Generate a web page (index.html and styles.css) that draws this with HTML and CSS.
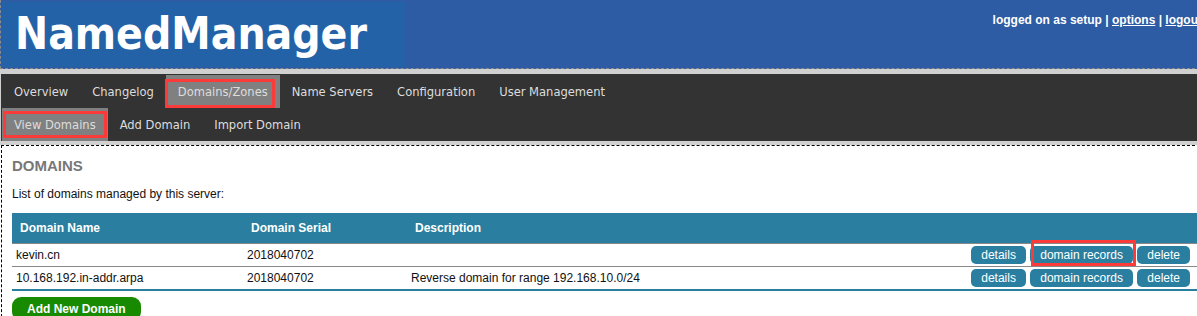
FILE: index.html
```html
<!DOCTYPE html>
<html>
<head>
    <link rel="stylesheet" href="styles.css">
</head>
<body>
<div class="page">
    <div class="header">
        <div class="logo">NamedManager</div>
        <div class="userbar">logged on as setup | <a href="#">options</a> | <a href="#">logout</a></div>
    </div>

    <div class="navwrap">
        <div class="nav">
            <div class="menu">
                <a href="#">Overview</a>
                <a href="#">Changelog</a>
                <a href="#" class="active">Domains/Zones<span class="mark mark-zones"></span></a>
                <a href="#">Name Servers</a>
                <a href="#">Configuration</a>
                <a href="#">User Management</a>
            </div>
            <div class="menu">
                <a href="#" class="active">View Domains<span class="mark mark-view"></span></a>
                <a href="#">Add Domain</a>
                <a href="#">Import Domain</a>
            </div>
        </div>
    </div>

    <div class="content">
        <h2 class="title">DOMAINS</h2>
        <p class="intro">List of domains managed by this server:</p>

        <table class="domains">
            <tr>
                <th class="c-name">Domain Name</th>
                <th class="c-serial">Domain Serial</th>
                <th class="c-desc">Description</th>
                <th></th>
            </tr>
            <tr>
                <td>kevin.cn</td>
                <td>2018040702</td>
                <td></td>
                <td class="actions">
                    <a href="#" class="btn">details</a>
                    <a href="#" class="btn">domain records<span class="mark mark-records"></span></a>
                    <a href="#" class="btn">delete</a>
                </td>
            </tr>
            <tr class="last">
                <td>10.168.192.in-addr.arpa</td>
                <td>2018040702</td>
                <td>Reverse domain for range 192.168.10.0/24</td>
                <td class="actions">
                    <a href="#" class="btn">details</a>
                    <a href="#" class="btn">domain records</a>
                    <a href="#" class="btn">delete</a>
                </td>
            </tr>
        </table>

        <a href="#" class="add-btn">Add New Domain</a>
    </div>
</div>
</body>
</html>
```

FILE: styles.css
```css
html, body {
    margin: 0;
    overflow: hidden;
    background: #fff;
    font-family: "Liberation Sans", Arial, sans-serif;
    font-size: 12px;
}

.page {
    width: 1240px;
}

/* top banner */
.header {
    display: flex;
    justify-content: space-between;
    height: 68px;
    background: #2d5ba4;
    border-left: 1px dashed #8a8a8a;
    border-bottom: 1px dashed #8a8a8a;
}

.logo {
    margin: 2px 0 0 1px;
    width: 390px;
    height: 65px;
    padding-left: 13px;
    background: #2462a8;
    color: #fff;
    font-family: "DejaVu Sans", sans-serif;
    font-stretch: condensed;
    font-weight: bold;
    font-size: 44px;
    line-height: 64px;
}

.userbar {
    padding: 13px 38px 0 0;
    color: #fff;
    font-weight: bold;
    font-size: 12px;
}

.userbar a {
    color: #fff;
}

/* menu */
.navwrap {
    background: #d0d0d0;
    padding: 5px 0 4px 1px;
}

.nav {
    background: #333;
    padding: 1px 0 0 1px;
}

.menu {
    display: flex;
    height: 33px;
}

.menu a {
    position: relative;
    padding: 0 12px;
    line-height: 33px;
    color: #ddd;
    text-decoration: none;
    font-family: "DejaVu Sans", sans-serif;
    font-stretch: condensed;
    font-size: 12.8px;
}

.menu a.active {
    background: #808080;
}

/* red highlight boxes drawn over the screenshot */
.mark {
    position: absolute;
    border: 3px solid #fb3a3a;
    pointer-events: none;
}

.mark-zones {
    left: -1px;
    top: 4px;
    width: 104px;
    height: 23px;
}

.mark-view {
    left: 1px;
    top: 3px;
    width: 98px;
    height: 21px;
}

.mark-records {
    left: 1px;
    top: -6px;
    width: 99px;
    height: 20px;
}

/* page body */
.content {
    border: 1px dashed #000;
    margin-left: 1px;
    padding: 11px 10px 20px;
}

.title {
    margin: 0;
    color: #777;
    font-size: 15px;
    font-weight: bold;
}

.intro {
    margin: 13px 0 12px;
    color: #111;
}

.domains {
    width: 1188px;
    border-collapse: collapse;
    margin-bottom: 6px;
}

.domains th {
    height: 30px;
    padding: 0 8px;
    background: #2a7fa1;
    color: #fff;
    font-weight: bold;
    text-align: left;
    border-bottom: 1px solid #888;
}

.domains th.c-name { width: 215px; }
.domains th.c-serial { width: 148px; }
.domains th.c-desc { width: 300px; }

.domains td {
    height: 22px;
    padding: 0 4px;
    color: #111;
    border-bottom: 1px solid #888;
}

.domains tr.last td {
    border-bottom: 2px solid #2a7fa1;
}

.domains td.actions {
    text-align: right;
    padding-right: 10px;
    white-space: nowrap;
}

.btn {
    position: relative;
    display: inline-block;
    height: 18px;
    line-height: 18px;
    padding: 0 10px;
    margin-left: 1px;
    background: #2a7fa1;
    color: #fff;
    text-decoration: none;
    border-radius: 5px;
}

.add-btn {
    display: inline-block;
    height: 24px;
    line-height: 24px;
    padding: 0 15px;
    background: #178a00;
    color: #fff;
    font-weight: bold;
    text-decoration: none;
    border-radius: 9px;
}
```
